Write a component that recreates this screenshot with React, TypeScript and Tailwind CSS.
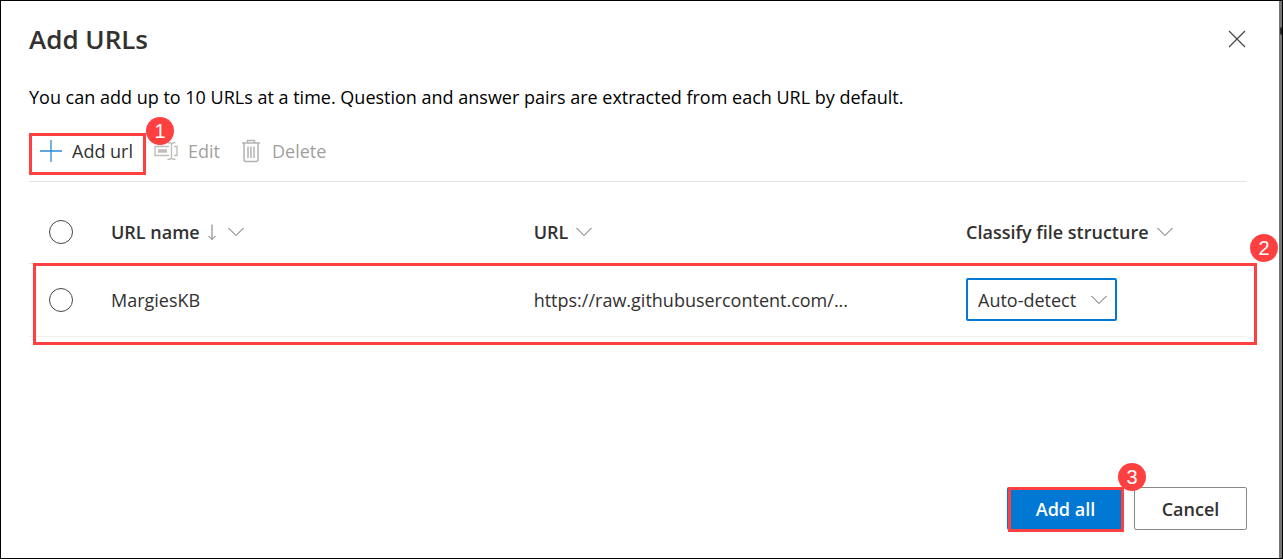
import type { ReactNode } from "react";

function Marker({ label, className }: { label: string; className: string }) {
  return (
    <span
      className={`absolute z-10 flex size-7 items-center justify-center rounded-full bg-[#ff4040] font-['Liberation_Sans',sans-serif] text-xl font-normal text-white ${className}`}
    >
      {label}
    </span>
  );
}

function Chevron() {
  return (
    <svg width="16" height="10" viewBox="0 0 16 10" fill="none" stroke="#605e5c" aria-hidden="true">
      <path d="M0.5 1 8 8.5 15.5 1" />
    </svg>
  );
}

function RoundCheck({ label }: { label: string }) {
  return (
    <input
      type="checkbox"
      aria-label={label}
      className="block size-6 appearance-none rounded-full border border-[#484644] bg-white checked:bg-[#0078d4]"
    />
  );
}

function ColumnHeader({ children, sorted = false }: { children: ReactNode; sorted?: boolean }) {
  return (
    <th scope="col" className="p-0 text-left font-semibold">
      <button type="button" className="flex items-center gap-2 whitespace-nowrap">
        <span>{children}</span>
        {sorted && (
          <svg width="8" height="18" viewBox="0 0 8 18" fill="none" stroke="#797775" className="mr-1" aria-hidden="true">
            <path d="M4 1.500V16.500M0.500 13 4 16.500 7.500 13" />
          </svg>
        )}
        <Chevron />
      </button>
    </th>
  );
}

export default function App() {
  return (
    <div className="flex min-h-screen border border-black bg-white font-['Open_Sans','Noto_Sans',sans-serif] text-lg leading-6 text-[#323130]">
      <main className="flex min-w-0 flex-1 flex-col pt-5 pr-8 pb-7 pl-7">
        <header className="flex items-center justify-between">
          <h1 className="text-[26px] leading-9 font-semibold">Add URLs</h1>
          <button type="button" aria-label="Close" className="flex size-5 items-center justify-center">
            <svg width="18" height="18" viewBox="0 0 18 18" fill="none" stroke="#484644" strokeWidth="1.200" aria-hidden="true">
              <path d="M1 1 17 17M17 1 1 17" />
            </svg>
          </button>
        </header>

        <p className="mt-7 text-black">
          You can add up to 10 URLs at a time. Question and answer pairs are extracted from each URL by default.
        </p>

        <div className="mt-6 flex items-center border-b border-[#e5e4e3] pb-1.5">
          <div className="relative">
            <button type="button" className="flex h-[42px] w-[117px] items-center gap-2.5 border-3 border-[#ff4040] pb-1.5 pl-2">
              <svg width="22" height="22" viewBox="0 0 22 22" fill="none" stroke="#2b88d8" strokeWidth="1.300" aria-hidden="true">
                <path d="M11 0V22M0 11H22" />
              </svg>
              <span className="whitespace-nowrap">Add url</span>
            </button>
            <Marker label="1" className="-top-4 -right-7" />
          </div>
          <button type="button" disabled className="ml-2 flex items-center gap-2.5 pb-1.5 text-[#a19f9d]">
            <svg width="24" height="20" viewBox="0 0 24 20" fill="none" stroke="#c0bebc" strokeWidth="1.400" aria-hidden="true">
              <path d="M15 5.500H1V14.500H15M20 5.500H23V14.500H20M13.500 1.700H16L17.500 3 19 1.700H21.500M13.500 18.300H16L17.500 17 19 18.300H21.500M17.500 3V17" />
              <path d="M4 10H13" strokeWidth="3.500" />
            </svg>
            Edit
          </button>
          <button type="button" disabled className="ml-5.5 flex items-center gap-3 pb-1.5 text-[#a19f9d]">
            <svg width="18" height="24" viewBox="0 0 18 24" fill="none" stroke="#b5b3b1" strokeWidth="1.500" aria-hidden="true">
              <path d="M0 4H18M5.500 4V1.500H12.500V4M2 4V20.500Q2 22.500 4 22.500H14Q16 22.500 16 20.500V4" />
              <path d="M6 7.500V19M9 7.500V19M12 7.500V19" />
            </svg>
            Delete
          </button>
        </div>

        <table className="w-full table-fixed border-collapse">
          <colgroup>
            <col className="w-[82px]" />
            <col className="w-[34.7%]" />
            <col className="w-[35.5%]" />
            <col />
          </colgroup>
          <thead>
            <tr className="h-[81px] border-b border-[#e5e4e3] [&>*]:pt-5">
              <th scope="col" className="pr-0 pb-0 pl-5">
                <RoundCheck label="Select all" />
              </th>
              <ColumnHeader sorted>URL name</ColumnHeader>
              <ColumnHeader>URL</ColumnHeader>
              <ColumnHeader>Classify file structure</ColumnHeader>
            </tr>
          </thead>
          <tbody>
            <tr className="relative h-[73px] border-b border-[#f0efee]">
              <td className="py-0 pr-0 pl-5">
                <RoundCheck label="Select MargiesKB" />
              </td>
              <td className="p-0">MargiesKB</td>
              <td className="p-0">https://raw.githubusercontent.com/...</td>
              <td className="p-0">
                <div className="relative w-[151px]">
                  <select
                    aria-label="File structure of MargiesKB"
                    className="block h-[43px] w-full appearance-none rounded-xs border-2 border-[#0078d4] bg-white pr-7 pl-2.5"
                  >
                    <option>Auto-detect</option>
                  </select>
                  <span className="pointer-events-none absolute inset-y-0 right-2.5 flex items-center">
                    <Chevron />
                  </span>
                </div>
                <div className="pointer-events-none absolute top-0 -right-2.5 -bottom-2.5 left-1 border-3 border-[#ff4040]">
                  <Marker label="2" className="-top-8 -right-6" />
                </div>
              </td>
            </tr>
          </tbody>
        </table>

        <footer className="mt-auto flex justify-end gap-2.5 font-semibold">
          <div className="relative">
            <button type="button" className="block h-[43px] w-[117px] rounded-xs bg-[#0078d4] text-white">
              Add all
            </button>
            <span className="pointer-events-none absolute top-0 right-0 -bottom-0.5 left-px border-3 border-[#ff4040]" />
            <Marker label="3" className="-top-6 -right-5.5" />
          </div>
          <button type="button" className="h-[43px] w-[113px] rounded-xs border border-[#8a8886] bg-white">
            Cancel
          </button>
        </footer>
      </main>
      <div className="flex w-[3px] shrink-0 justify-end bg-[#767676] pt-[26px]">
        <span className="h-2 w-0.5 rounded-l-full bg-[#222222]" />
      </div>
    </div>
  );
}
